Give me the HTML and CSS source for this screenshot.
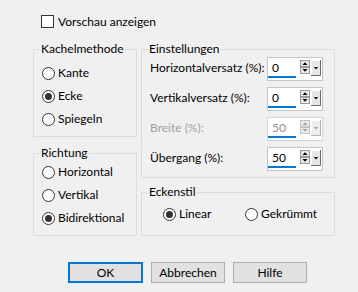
FILE: index.html
```html
<!DOCTYPE html>
<html lang="de">
<head>
<meta charset="utf-8">
<title>Nahtlos kacheln</title>
<link rel="stylesheet" href="styles.css">
</head>
<body>
<div class="dialog">
  <div class="check-row"><span class="checkbox"></span><span>Vorschau anzeigen</span></div>
  <div class="groups">
    <div class="col">
      <fieldset class="group g-kachel">
        <legend>Kachelmethode</legend>
        <div class="radio-list">
          <div class="opt"><span class="radio"></span><span>Kante</span></div>
          <div class="opt"><span class="radio on"></span><span>Ecke</span></div>
          <div class="opt"><span class="radio"></span><span>Spiegeln</span></div>
        </div>
      </fieldset>
      <fieldset class="group g-richtung">
        <legend>Richtung</legend>
        <div class="radio-list">
          <div class="opt"><span class="radio"></span><span>Horizontal</span></div>
          <div class="opt"><span class="radio"></span><span>Vertikal</span></div>
          <div class="opt"><span class="radio on"></span><span>Bidirektional</span></div>
        </div>
      </fieldset>
    </div>
    <div class="col">
      <fieldset class="group g-einst">
        <legend>Einstellungen</legend>
        <div class="fields">
          <div class="frow">
            <span>Horizontalversatz (%):</span>
            <div class="spin">
              <span class="val">0</span>
              <svg class="ud" width="10" height="14" viewBox="0 0 10 14"><rect x="0.5" y="0.5" width="9" height="6" fill="#e9e9e9" stroke="#9a9a9a"/><rect x="0.5" y="7.5" width="9" height="6" fill="#e9e9e9" stroke="#9a9a9a"/><polygon points="2.5,5 7.5,5 5,2.2" fill="#000"/><polygon points="2.5,9 7.5,9 5,11.8" fill="#000"/></svg>
              <svg class="dd" width="10" height="16" viewBox="0 0 10 16"><rect x="0" y="0" width="10" height="16" fill="#e6e6e6"/><path d="M0.5 15.5V0.5H9" stroke="#fff" fill="none"/><path d="M9.5 0V15.5H0" stroke="#6a6a6a" fill="none"/><polygon points="2.8,7 7.2,7 5,9.6" fill="#000"/></svg>
            </div>
          </div>
          <div class="frow">
            <span>Vertikalversatz (%):</span>
            <div class="spin">
              <span class="val">0</span>
              <svg class="ud" width="10" height="14" viewBox="0 0 10 14"><rect x="0.5" y="0.5" width="9" height="6" fill="#e9e9e9" stroke="#9a9a9a"/><rect x="0.5" y="7.5" width="9" height="6" fill="#e9e9e9" stroke="#9a9a9a"/><polygon points="2.5,5 7.5,5 5,2.2" fill="#000"/><polygon points="2.5,9 7.5,9 5,11.8" fill="#000"/></svg>
              <svg class="dd" width="10" height="16" viewBox="0 0 10 16"><rect x="0" y="0" width="10" height="16" fill="#e6e6e6"/><path d="M0.5 15.5V0.5H9" stroke="#fff" fill="none"/><path d="M9.5 0V15.5H0" stroke="#6a6a6a" fill="none"/><polygon points="2.8,7 7.2,7 5,9.6" fill="#000"/></svg>
            </div>
          </div>
          <div class="frow disabled">
            <span>Breite (%):</span>
            <div class="spin">
              <span class="val">50</span>
              <svg class="ud" width="10" height="14" viewBox="0 0 10 14"><rect x="0.5" y="0.5" width="9" height="6" fill="#ececec" stroke="#c2c2c2"/><rect x="0.5" y="7.5" width="9" height="6" fill="#ececec" stroke="#c2c2c2"/><polygon points="2.5,5 7.5,5 5,2.2" fill="#a0a0a0"/><polygon points="2.5,9 7.5,9 5,11.8" fill="#a0a0a0"/></svg>
              <svg class="dd" width="10" height="16" viewBox="0 0 10 16"><rect x="0" y="0" width="10" height="16" fill="#ececec"/><path d="M0.5 15.5V0.5H9" stroke="#fff" fill="none"/><path d="M9.5 0V15.5H0" stroke="#b4b4b4" fill="none"/><polygon points="2.8,7 7.2,7 5,9.6" fill="#a0a0a0"/></svg>
            </div>
          </div>
          <div class="frow">
            <span>Übergang (%):</span>
            <div class="spin">
              <span class="val">50</span>
              <svg class="ud" width="10" height="14" viewBox="0 0 10 14"><rect x="0.5" y="0.5" width="9" height="6" fill="#e9e9e9" stroke="#9a9a9a"/><rect x="0.5" y="7.5" width="9" height="6" fill="#e9e9e9" stroke="#9a9a9a"/><polygon points="2.5,5 7.5,5 5,2.2" fill="#000"/><polygon points="2.5,9 7.5,9 5,11.8" fill="#000"/></svg>
              <svg class="dd" width="10" height="16" viewBox="0 0 10 16"><rect x="0" y="0" width="10" height="16" fill="#e6e6e6"/><path d="M0.5 15.5V0.5H9" stroke="#fff" fill="none"/><path d="M9.5 0V15.5H0" stroke="#6a6a6a" fill="none"/><polygon points="2.8,7 7.2,7 5,9.6" fill="#000"/></svg>
            </div>
          </div>
        </div>
      </fieldset>
      <fieldset class="group g-ecken">
        <legend>Eckenstil</legend>
        <div class="hradios">
          <div class="opt"><span class="radio on"></span><span>Linear</span></div>
          <div class="opt"><span class="radio"></span><span>Gekrümmt</span></div>
        </div>
      </fieldset>
    </div>
  </div>
  <div class="buttons">
    <button class="btn default">OK</button>
    <button class="btn">Abbrechen</button>
    <button class="btn">Hilfe</button>
  </div>
</div>
</body>
</html>
```

FILE: styles.css
```css
html, body {
  margin: 0;
  padding: 0;
}
body {
  width: 358px;
  height: 292px;
  background: #f0f0f0;
  font-family: Lato, "Liberation Sans", sans-serif;
  font-size: 12px;
  line-height: 16px;
  color: #000;
  overflow: hidden;
}
.dialog {
  padding: 15px 0 0 33px;
}
.check-row {
  display: flex;
  align-items: center;
  gap: 4px;
  margin-left: 8px;
  height: 13px;
  margin-bottom: 13px;
}
.checkbox {
  width: 13px;
  height: 13px;
  box-sizing: border-box;
  border: 1px solid #333;
  background: #fff;
}
.groups {
  display: grid;
  grid-template-columns: 104px 194px;
  column-gap: 4px;
}
.col {
  display: flex;
  flex-direction: column;
}
.group {
  margin: 0;
  min-width: 0;
  border: 1px solid #dcdcdc;
  padding: 0 0 0 8px;
}
.group legend {
  padding: 0 1px;
  margin-left: -2px;
  line-height: 16px;
}
.radio-list {
  display: flex;
  flex-direction: column;
  gap: 7px;
}
.opt {
  display: flex;
  align-items: center;
  gap: 3px;
  height: 16px;
}
.radio {
  width: 13px;
  height: 13px;
  box-sizing: border-box;
  border: 1px solid #333;
  border-radius: 50%;
  background: #fff;
  display: flex;
  align-items: center;
  justify-content: center;
  flex: none;
}
.radio.on::after {
  content: "";
  width: 7px;
  height: 7px;
  border-radius: 50%;
  background: #333;
}
.g-kachel {
  padding-top: 8px;
  padding-bottom: 9px;
}
.g-richtung {
  margin-top: 8px;
  padding-top: 3px;
  padding-bottom: 9px;
}
.g-einst {
  padding-top: 0;
  padding-bottom: 6px;
}
.fields {
  display: flex;
  flex-direction: column;
  gap: 6px;
}
.frow {
  display: grid;
  grid-template-columns: 117px 56px;
  align-items: center;
  height: 24px;
}
.frow > span {
  margin-top: -3px;
}
.frow.disabled > span {
  color: #a0a0a0;
}
.spin {
  box-sizing: border-box;
  width: 56px;
  height: 24px;
  border: 1px solid #c4c4c4;
  background: #fff;
  display: flex;
  align-items: flex-start;
}
.frow.disabled .spin {
  border-color: #d4d4d4;
}
.val {
  box-sizing: border-box;
  width: 28px;
  height: 20px;
  padding: 3px 0 0 4px;
  line-height: 14px;
  border-bottom: 2px solid #0078d7;
}
.frow.disabled .val {
  color: #909090;
}
.ud {
  display: block;
  margin: 2px 0 0 4px;
}
.dd {
  display: block;
  margin: 2px 0 0 1px;
}
.g-ecken {
  margin-top: 6px;
  padding-top: 6px;
  padding-bottom: 13px;
}
.hradios {
  display: grid;
  grid-template-columns: 82px auto;
  margin-left: 13px;
}
.buttons {
  display: flex;
  gap: 8px;
  margin: 26px 0 0 35px;
}
.btn {
  box-sizing: border-box;
  width: 74px;
  height: 21px;
  padding: 0;
  margin: 0;
  background: #e1e1e1;
  border: 1px solid #adadad;
  font-family: Lato, "Liberation Sans", sans-serif;
  font-size: 12px;
  color: #000;
}
.btn.default {
  width: 75px;
  border: 2px solid #0078d7;
}
```
